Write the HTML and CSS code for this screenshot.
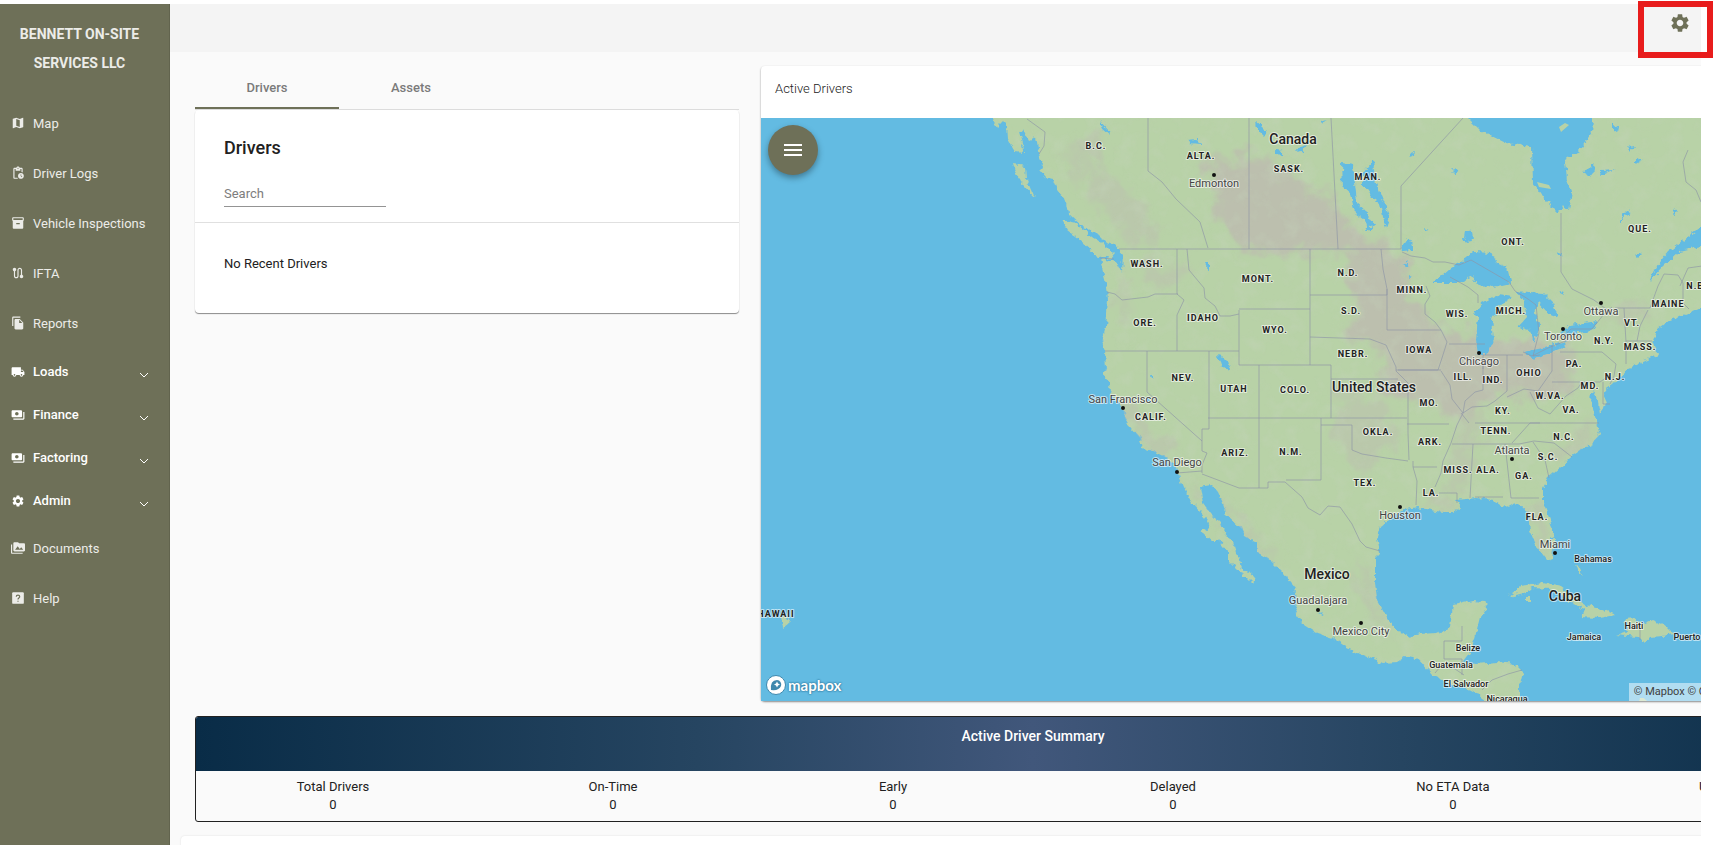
FILE: index.html
```html
<!DOCTYPE html>
<html lang="en">
<head>
<meta charset="utf-8">
<title>Bennett On-Site Services LLC</title>
<link rel="stylesheet" href="styles.css">
</head>
<body>
<div class="shell">
  <aside class="sidebar">
    <h1 class="brand">BENNETT ON-SITE SERVICES LLC</h1>
    <nav class="nav">
      <a class="nav-item" href="#map"><svg class="icon" viewBox="0 0 24 24"><path d="M20.500 3l-.16.03L15 5.100 9 3 3.360 4.900c-.21.07-.36.25-.36.48V20.500c0 .28.22.5.5.5l.16-.03L9 18.900l6 2.100 5.640-1.900c.21-.07.36-.25.36-.48V3.500c0-.28-.22-.5-.5-.5zM15 19l-6-2.110V5l6 2.110V19z"/></svg>Map</a>
      <a class="nav-item" href="#logs"><svg class="icon" viewBox="0 0 24 24"><path d="M17 12c-2.760 0-5 2.240-5 5s2.240 5 5 5 5-2.240 5-5-2.240-5-5-5zm1.650 7.350L16.500 17.200V14h1v2.790l1.850 1.850-.7.71zM18 3h-3.180C14.400 1.840 13.300 1 12 1s-2.400.84-2.820 2H6c-1.100 0-2 .9-2 2v15c0 1.100.9 2 2 2h6.110c-.59-.57-1.070-1.250-1.420-2H6V5h2v3h8V5h2v5.080c.71.1 1.380.31 2 .6V5c0-1.100-.9-2-2-2zm-6 2c-.55 0-1-.45-1-1s.45-1 1-1 1 .45 1 1-.45 1-1 1z"/></svg>Driver Logs</a>
      <a class="nav-item" href="#inspections"><svg class="icon" viewBox="0 0 24 24"><path d="M20 2H4c-1 0-2 .9-2 2v3.010c0 .72.43 1.340 1 1.690V20c0 1.100 1.100 2 2 2h14c.9 0 2-.9 2-2V8.700c.57-.35 1-.97 1-1.690V4c0-1.100-1-2-2-2zm-5 12H9v-2h6v2zm5-7H4V4h16v3z"/></svg>Vehicle Inspections</a>
      <a class="nav-item" href="#ifta"><svg class="icon" viewBox="0 0 24 24"><path d="M19 15.180V7c0-2.210-1.790-4-4-4s-4 1.790-4 4v10c0 1.100-.9 2-2 2s-2-.9-2-2V8.820C8.160 8.400 9 7.300 9 6c0-1.660-1.340-3-3-3S3 4.340 3 6c0 1.300.84 2.400 2 2.820V17c0 2.210 1.790 4 4 4s4-1.790 4-4V7c0-1.100.9-2 2-2s2 .9 2 2v8.180c-1.160.41-2 1.510-2 2.820 0 1.660 1.340 3 3 3s3-1.340 3-3c0-1.300-.84-2.400-2-2.820z"/></svg>IFTA</a>
      <a class="nav-item" href="#reports"><svg class="icon" viewBox="0 0 24 24"><path d="M16 1H4c-1.100 0-2 .9-2 2v14h2V3h12V1zm-1 4l6 6v10c0 1.100-.9 2-2 2H7.990C6.890 23 6 22.100 6 21l.01-14c0-1.100.89-2 1.990-2h7zm-1 7h5.500L14 6.500V12z"/></svg>Reports</a>
      <div class="groups">
        <button class="nav-item group" type="button"><svg class="icon" viewBox="0 0 24 24"><path d="M20 8h-3V4H3c-1.100 0-2 .9-2 2v11h2c0 1.660 1.340 3 3 3s3-1.340 3-3h6c0 1.660 1.340 3 3 3s3-1.340 3-3h2v-5l-3-4zM6 18.500c-.83 0-1.500-.67-1.500-1.500s.67-1.500 1.500-1.500 1.500.67 1.500 1.500-.67 1.500-1.500 1.500zm13.500-9l1.960 2.500H17V9.500h2.500zm-1.500 9c-.83 0-1.500-.67-1.500-1.500s.67-1.500 1.500-1.500 1.500.67 1.500 1.500-.67 1.500-1.500 1.500z"/></svg>Loads<svg class="chevron" viewBox="0 0 10 6"><path d="M1 1l4 4 4-4"/></svg></button>
        <button class="nav-item group" type="button"><svg class="icon" viewBox="0 0 24 24"><path d="M19 14V6c0-1.100-.9-2-2-2H3c-1.100 0-2 .9-2 2v8c0 1.100.9 2 2 2h14c1.100 0 2-.9 2-2zm-9-1c-1.660 0-3-1.340-3-3s1.340-3 3-3 3 1.340 3 3-1.340 3-3 3zm13-6v11c0 1.100-.9 2-2 2H4v-2h17V7h2z"/></svg>Finance<svg class="chevron" viewBox="0 0 10 6"><path d="M1 1l4 4 4-4"/></svg></button>
        <button class="nav-item group" type="button"><svg class="icon" viewBox="0 0 24 24"><path d="M19 14V6c0-1.100-.9-2-2-2H3c-1.100 0-2 .9-2 2v8c0 1.100.9 2 2 2h14c1.100 0 2-.9 2-2zm-9-1c-1.660 0-3-1.340-3-3s1.340-3 3-3 3 1.340 3 3-1.340 3-3 3zm13-6v11c0 1.100-.9 2-2 2H4v-2h17V7h2z"/></svg>Factoring<svg class="chevron" viewBox="0 0 10 6"><path d="M1 1l4 4 4-4"/></svg></button>
        <button class="nav-item group" type="button"><svg class="icon" viewBox="0 0 24 24"><path id="gear" d="M19.140 12.940c.04-.3.06-.61.06-.94 0-.32-.02-.64-.07-.94l2.030-1.580c.18-.14.23-.41.12-.61l-1.920-3.320c-.12-.22-.37-.29-.59-.22l-2.390.96c-.5-.38-1.030-.7-1.620-.94l-.36-2.540c-.04-.24-.24-.41-.48-.41h-3.840c-.24 0-.43.17-.47.41l-.36 2.540c-.59.24-1.130.57-1.620.94l-2.390-.96c-.22-.08-.47 0-.59.22L2.740 8.870c-.12.21-.08.47.12.61l2.030 1.580c-.05.3-.09.63-.09.94s.02.64.07.94l-2.030 1.580c-.18.14-.23.41-.12.61l1.920 3.320c.12.22.37.29.59.22l2.390-.96c.5.38 1.030.7 1.620.94l.36 2.540c.05.24.24.41.48.41h3.840c.24 0 .44-.17.47-.41l.36-2.540c.59-.24 1.130-.56 1.620-.94l2.390.96c.22.08.47 0 .59-.22l1.920-3.320c.12-.22.07-.47-.12-.61l-2.010-1.580zM12 15.600c-1.980 0-3.600-1.620-3.600-3.600s1.620-3.600 3.600-3.600 3.600 1.620 3.600 3.600-1.620 3.600-3.600 3.600z"/></svg>Admin<svg class="chevron" viewBox="0 0 10 6"><path d="M1 1l4 4 4-4"/></svg></button>
      </div>
      <a class="nav-item" href="#documents"><svg class="icon" viewBox="0 0 24 24"><path d="M2 6H0v5h.01L0 20c0 1.100.9 2 2 2h18v-2H2V6zm20-2h-8l-2-2H6c-1.100 0-1.990.9-1.990 2L4 16c0 1.100.9 2 2 2h16c1.100 0 2-.9 2-2V6c0-1.100-.9-2-2-2zM7 15l4.500-6 3.500 4.510 2.500-3.010L21 15H7z"/></svg>Documents</a>
      <a class="nav-item" href="#help"><svg class="icon" viewBox="0 0 24 24"><rect x="2" y="2" width="20" height="20" rx="2"/><path class="cut" d="M9 10q0-3 3-3t3 3q0 1-1.500 2T12 14.500M12 16.500v2"/></svg>Help</a>
    </nav>
  </aside>

  <div class="page">
    <header class="topbar">
      <button class="settings" type="button" aria-label="Settings"><svg viewBox="0 0 24 24"><use href="#gear"/></svg></button>
    </header>
    <main class="content">
      <div class="panels">
        <section class="drivers">
          <div class="tabs" role="tablist">
            <button class="tab active" type="button" role="tab">Drivers</button>
            <button class="tab" type="button" role="tab">Assets</button>
          </div>
          <div class="card">
            <div class="card-head">
              <h2>Drivers</h2>
              <input class="search" type="text" placeholder="Search" aria-label="Search">
            </div>
            <p class="empty">No Recent Drivers</p>
          </div>
        </section>

        <section class="map-card">
          <h2 class="map-title">Active Drivers</h2>
          <div class="map">
            <svg class="map-art" viewBox="761 118 1110 583" preserveAspectRatio="xMinYMin slice">
              <defs>
                <filter id="coast" x="0" y="0" width="1" height="1"><feTurbulence type="fractalNoise" baseFrequency=".18" numOctaves="2" seed="4" result="n"/><feDisplacementMap in="SourceGraphic" in2="n" scale="7" xChannelSelector="R" yChannelSelector="G"/></filter>
                <filter id="soft" x="-.3" y="-.3" width="1.600" height="1.600"><feTurbulence type="fractalNoise" baseFrequency=".05" numOctaves="3" seed="9" result="n"/><feGaussianBlur in="SourceGraphic" stdDeviation="4" result="b"/><feDisplacementMap in="b" in2="n" scale="36" xChannelSelector="R" yChannelSelector="G"/></filter>
                <filter id="relief" x="0" y="0" width="1" height="1"><feTurbulence type="fractalNoise" baseFrequency=".06" numOctaves="4" seed="21"/><feColorMatrix values="0 0 0 0 .56  0 0 0 0 .66  0 0 0 0 .5  2.500 0 0 0 -1.150"/><feComposite in2="SourceGraphic" operator="in"/></filter>
                <path id="mainland" d="M992 118L997 127 1003 121 1007 125 1008 140 1015 152 1024 153 1018 135 1023 128 1029 140 1036 137 1040 157 1043 165 1040 172 1045 178 1053 180 1057 190 1063 197 1067 207 1068 213 1083 227 1095 232 1103 240 1115 245 1123 255 1122 272 1117 262 1100 259 1103 272 1107 287 1108 300 1106 327 1102 340 1105 352 1106 367 1103 375 1109 382 1110 393 1117 402 1123 408 1125 418 1130 427 1140 438 1142 448 1153 451 1165 457 1172 464 1177 472 1183 487 1192 503 1207 520 1209 528 1200 531 1212 540 1218 540 1228 552 1228 560 1240 572 1252 584 1255 578 1248 570 1243 570 1237 555 1233 542 1223 530 1220 522 1210 512 1203 503 1200 487 1212 485 1218 492 1223 503 1227 515 1243 530 1245 537 1257 543 1257 552 1270 560 1283 573 1295 588 1298 603 1295 613 1302 623 1317 633 1333 638 1347 648 1367 657 1383 663 1397 662 1407 656 1417 658 1433 675 1450 683 1463 688 1480 693 1487 710 1520 710 1520 685 1523 672 1515 664 1497 662 1477 664 1463 662 1472 650 1475 637 1480 617 1487 607 1485 602 1473 601 1453 605 1450 627 1437 633 1420 634 1408 637 1397 630 1388 620 1377 600 1375 583 1375 558 1380 553 1377 537 1380 527 1388 520 1403 510 1417 507 1430 510 1443 512 1453 512 1460 507 1455 500 1477 498 1493 500 1503 507 1517 503 1528 513 1530 530 1537 547 1547 560 1553 558 1555 540 1550 520 1543 503 1543 488 1548 478 1560 468 1570 457 1585 447 1593 443 1600 435 1597 423 1593 410 1590 400 1592 390 1597 397 1600 413 1607 403 1602 392 1613 385 1622 375 1628 368 1640 363 1658 355 1652 343 1657 330 1670 320 1690 312 1701 307 1880 300 1880 110 992 110Z"/>
                <clipPath id="land-clip"><use href="#mainland"/></clipPath>
              </defs>
              <rect class="water" x="761" y="118" width="1110" height="583"/>
              <g class="land" filter="url(#coast)">
                <use href="#mainland"/>
                <path d="M1013 164l13 2 1 13 8 19-11-12-8-11zM1062 220l14 3 16 14 14 9 8 8-4 5-14-4-16-15-12-9zM1010 122l9 6 6 22-12-18zM1508 597l13-10 22-4 18 4 14 10 14 9 12 3 14 6-16 3-18-1 5-8-12-4-12-9-10-7-20-1-8 5zM1525 598h5v3h-5zM1625 620l10-1 8 5 9-4 14 6 8 8-12 2-12 1-5 6-6-6-24-2 14-4-2-5zM1568 636l12-1 10 4-10 1zM1576 565l4 1 2 10-4-5zM1781 614l8 1v6l-7 6zM1640 699l5-1 3 5h-10zM1778 609h-4zM781 616l7 1 2 5-7 6z"/>
              </g>
              <g clip-path="url(#land-clip)">
                <g class="plain" filter="url(#soft)">
                  <path d="M1204 158l60 0 50 30 40 36 50 30 8 50 36 26 44 14 50-6 30 8 4 30-34 24-50-4-26 24-50-20-36-6 4-44-30-10-2-84-50-6-60 4-20-30z"/>
                  <path class="thin" d="M1060 150l20 30 40 50 40 24-10-40-50-50zM1100 130l8 30-20 20-14-40zM1330 400l50 0 20 40-34 30-26-20zM1350 390l34 14 10 40-24 20-14-40zM1125 400l50 50-12 16-44-50zM1150 260l36 10-20 24-20-8zM1120 270l8 0 0 60-8 0zM1190 480l30 20 60 66-20-8-60-60zM1350 550l22 30 22 56-20-20zM1405 340l60 20-20 20-30-10zM1470 380l14 30-20 80-14-2 8-60zM1605 315l30-14 20 8-30 20zM1525 500l20 4 6 50-14-10zM1430 490l30 16-10 10-24-6zM1550 450l44-24 8 10-44 30z"/>
                </g>
                <use href="#mainland" filter="url(#relief)" opacity=".35"/>
              </g>
              <g class="water" filter="url(#coast)">
                <path d="M1468 110V118L1480 130 1507 143 1532 147 1533 183 1545 200 1558 213 1563 205 1569 210 1572 193 1567 180 1565 160 1580 150 1592 132 1594 110ZM1433 283L1450 268 1460 263 1473 252 1492 253 1497 263 1507 267 1511 283 1493 287 1480 285 1473 280 1475 275 1457 283ZM1482 303L1497 295 1513 297 1503 303 1497 307 1492 320 1494 340 1487 355 1478 355 1476 340 1478 317 1474 313ZM1515 291L1543 293 1553 303 1558 317 1548 313 1538 302 1535 313 1540 327 1534 343 1530 330 1518 327 1527 317 1523 300ZM1523 352L1543 348 1565 341 1566 346 1550 353 1532 359ZM1560 333L1570 325 1597 321 1593 331 1570 334ZM1363 172L1373 160 1375 180 1383 200 1390 217 1386 228 1383 217 1380 203 1372 197 1363 184ZM1342 163L1353 165 1355 183 1357 203 1365 210 1374 224 1368 231 1365 220 1355 212 1350 193 1343 187ZM1650 281L1657 266 1667 253 1687 237 1701 228 1880 200V240L1701 246 1680 251 1663 267ZM1465 230l7 1 1 10-6 1-3-5zM1218 355l4 1 8 8-3 6-6-4zM1100 121l9 10 2 5-9-8zM1187 140l10-1 5 5-13-1zM1402 245l5-7 4 5 2 7-10 1zM1256 121l6 5 5 5-3 5-7-7zM1276 149l7 1v7l-7-5zM1300 147l6-2-4 6-6 1zM1411 153l5-1-3 5-4-1zM1452 170l6 1-2 3zM1582 171l8-3 4-5 1 8-4 5zM1601 170l14-1-7 3-8 4zM1627 147l8-1-4 5zM1612 124l6 3-1 5-5-4zM1635 158l6 3-6 2zM1619 221l8-10 4 1-9 7-3 5zM1675 208l3 4-4 4zM1557 252l5 2-1 3zM1636 253l5 2-3 3zM1424 228l5 2-4 1zM1403 265l6-4-2 5zM1408 275l4 2-4 2zM1320 121l6-2-3 5zM1147 399l2-2 2 5-2 1zM1151 377h2v4zM1206 264h3v6zM1560 290l5 1-3 3zM1550 536l4 3-4 2zM1318 614l5-1-1 3z"/>
              </g>
              <path class="lake-isle" d="M1537 182l12 3 2 4-12-2zM1559 127l6-4 4 2-8 7z"/>
              <g class="borders">
                <path d="M1119 249H1401V242M1402 252l9 4 14 2 8 4 12 0 14 3 12-5 38 22 6 9 13 8 8 6 3 28-6 23 7-1M1523 352l9 4 16-8 20-8M1563 337l8-8h21l12-15 8-7M1615 308h35l8-22 6-12 14 1 5 8v20l6 6M1177 473l25-2M1202 474L1239 488H1268V482H1285L1302 497 1308 508 1320 515 1328 506 1340 507 1352 524 1360 541 1366 547 1380 551M1027 119l18 13-1 14-5 8M1100 258l14 1M1444 659v-18h18v-15M1444 659h18v16M1435 673l5-6h12l12 8M1482 690l10-10 16-6 14-4M1640 624v16"/>
                <path d="M1148 118V171L1162 182 1176 199 1200 222 1208 248M1249 118V249M1331 118L1338 249M1463 118L1401 186V242M1561 213V272L1572 289 1594 300 1610 312M1177 249V294L1184 300 1177 315V351M1105 351H1239M1187 249L1189 270 1204 288 1205 298 1215 306 1220 316H1230L1239 314M1107 292l8 2 7 6 26-3 7-3h23M1239 310V365M1239 309H1310M1310 249V365M1310 295H1387M1239 365H1331V418M1310 337l60 2 16 6 10 22 0 4M1381 249l2 20 4 20v41h54l6 12-5 16-4 12h-40M1387 289v6M1331 379H1398M1259 365V488M1209 351V418M1147 351V392L1202 441M1208 418H1407M1209 418v11h-7v22l5 2-5 12 0 8M1321 418v62h-35M1321 425h31v25l10 4 24 4 22 3M1396 371l12 12v50l1 27M1396 370h45M1407 424h42M1413 461v6l4 14-1 24M1413 467h24M1439 493h18v10M1426 286l4 10-5 8 0 10 10 8 6 8M1450 277l18 10 10 8 0 8M1449 344h36M1441 371l9 14 2 14 11 14 2-12 10-9 8-2v-32M1507 355v36l-12 10-8 5-15 1-9 6-6 12-6 18-8 18-2 12-6 14M1483 355h40M1552 345v26l-14 20-14-2-17 8M1552 382h48l10-7M1560 352h42l14 12-2 12-4 8M1530 392l8 16 12 6 16-18 12-8 4-6M1475 423H1599M1452 444h67l15-3 20 2 18 14M1512 443l18-20 10 0M1473 444l-3 54M1505 444l6 54 28 0M1475 497h28M1533 442l12 18 4 18M1624 308l2 34 0 22M1648 310l-8 16-3 15M1626 341h26M1483 355v14M1461 413l8 10M1603 382v22h7"/>
                <path d="M1688 150l-5 12 3 20 10 8 5 12M1680 286l8-18 14-2"/>
              </g>
              <g class="state">
                <text x="1096" y="149">B.C.</text><text x="1201" y="159">ALTA.</text><text x="1289" y="172">SASK.</text><text x="1368" y="180">MAN.</text><text x="1513" y="245">ONT.</text><text x="1640" y="232">QUE.</text>
                <text x="1147" y="267">WASH.</text><text x="1258" y="282">MONT.</text><text x="1348" y="276">N.D.</text><text x="1412" y="293">MINN.</text><text x="1351" y="314">S.D.</text><text x="1457" y="317">WIS.</text><text x="1511" y="314">MICH.</text>
                <text x="1145" y="326">ORE.</text><text x="1203" y="321">IDAHO</text><text x="1275" y="333">WYO.</text><text x="1353" y="357">NEBR.</text><text x="1419" y="353">IOWA</text><text x="1529" y="376">OHIO</text><text x="1463" y="380">ILL.</text><text x="1493" y="383">IND.</text>
                <text x="1183" y="381">NEV.</text><text x="1234" y="392">UTAH</text><text x="1295" y="393">COLO.</text><text x="1429" y="406">MO.</text><text x="1503" y="414">KY.</text><text x="1550" y="399">W.VA.</text><text x="1571" y="413">VA.</text>
                <text x="1151" y="420">CALIF.</text><text x="1235" y="456">ARIZ.</text><text x="1291" y="455">N.M.</text><text x="1378" y="435">OKLA.</text><text x="1430" y="445">ARK.</text><text x="1496" y="434">TENN.</text><text x="1564" y="440">N.C.</text><text x="1548" y="460">S.C.</text>
                <text x="1365" y="486">TEX.</text><text x="1431" y="496">LA.</text><text x="1458" y="473">MISS.</text><text x="1488" y="473">ALA.</text><text x="1524" y="479">GA.</text><text x="1537" y="520">FLA.</text>
                <text x="1604" y="344">N.Y.</text><text x="1574" y="367">PA.</text><text x="1615" y="380">N.J.</text><text x="1590" y="389">MD.</text><text x="1632" y="326">VT.</text><text x="1640" y="350">MASS.</text><text x="1668" y="307">MAINE</text><text x="1697" y="289">N.B.</text><text x="776" y="617">HAWAII</text>
              </g>
              <g class="country">
                <text x="1293" y="144">Canada</text><text x="1374" y="392">United States</text><text x="1327" y="579">Mexico</text><text x="1565" y="601">Cuba</text>
              </g>
              <g class="city">
                <text x="1214" y="187">Edmonton</text><text x="1123" y="403">San Francisco</text><text x="1177" y="466">San Diego</text><text x="1400" y="519">Houston</text><text x="1318" y="604">Guadalajara</text><text x="1361" y="635">Mexico City</text><text x="1555" y="548">Miami</text><text x="1512" y="454">Atlanta</text><text x="1479" y="365">Chicago</text><text x="1563" y="340">Toronto</text><text x="1601" y="315">Ottawa</text>
              </g>
              <g class="island">
                <text x="1593" y="562">Bahamas</text><text x="1634" y="629">Haiti</text><text x="1584" y="640">Jamaica</text><text x="1697" y="640">Puerto Rico</text><text x="1468" y="651">Belize</text><text x="1451" y="668">Guatemala</text><text x="1466" y="687">El Salvador</text><text x="1507" y="702">Nicaragua</text>
              </g>
              <path class="dots" d="M1214 175h0M1123 408h0M1177 472h0M1400 507h0M1318 610h0M1361 623h0M1555 553h0M1512 459h0M1479 353h0M1563 329h0M1601 303h0"/>
            </svg>
            <button class="fab" type="button" aria-label="Menu"><svg viewBox="0 0 18 12"><path d="M0 0h18v2H0zM0 5h18v2H0zM0 10h18v2H0z"/></svg></button>
            <a class="mapbox" href="#mapbox"><svg viewBox="0 0 20 20"><circle cx="10" cy="10" r="9.500" fill="#fff" stroke="#3f88ad"/><path d="M5 15q-1-10 6-10a4.500 4.500 0 0 1 4 6q-2 5-10 4z" fill="#3f88ad"/><path d="M11 6.500l1 2 2 1-2 1-1 2-1-2-2-1 2-1z" fill="#fff"/></svg>mapbox</a>
            <p class="attribution">© Mapbox © OpenStreetMap Improve this map</p>
          </div>
        </section>
      </div>

      <section class="summary">
        <h2>Active Driver Summary</h2>
        <dl class="stats">
          <div><dt>Total Drivers</dt><dd>0</dd></div>
          <div><dt>On-Time</dt><dd>0</dd></div>
          <div><dt>Early</dt><dd>0</dd></div>
          <div><dt>Delayed</dt><dd>0</dd></div>
          <div><dt>No ETA Data</dt><dd>0</dd></div>
          <div><dt>Unassigned</dt><dd>0</dd></div>
        </dl>
      </section>
      <section class="next-card" aria-label="Details"></section>
    </main>
  </div>
  <div class="callout"></div>
</div>
</body>
</html>
```
FILE: styles.css
```css
* { box-sizing: border-box; }

body {
  margin: 0;
  background: #fff;
  color: #212121;
  font-family: Roboto, "Liberation Sans", sans-serif;
  font-size: 13px;
}

h1, h2, p, dl, dd { margin: 0; }
button, input { font: inherit; color: inherit; border: 0; background: none; padding: 0; }

.shell {
  position: relative;
  display: flex;
  height: 100vh;
  padding: 4px 12px 0 0;
  overflow: hidden;
}

/* Sidebar */
.sidebar {
  flex: 0 0 170px;
  background: #6e7058;
  border-right: 1px solid #62644e;
  color: #ecece8;
}
.brand {
  padding: 16px 20px 20px 10px;
  font-size: 14px;
  font-weight: 700;
  line-height: 29px;
  text-align: center;
}
.nav { display: flex; flex-direction: column; }
.nav-item {
  display: flex;
  align-items: center;
  gap: 8px;
  width: 100%;
  height: 50px;
  padding: 0 20px 0 11px;
  color: inherit;
  text-align: left;
  text-decoration: none;
}
.groups { padding: 2px 0 1px; }
.group { height: 43px; color: #fff; font-weight: 500; }
.icon { width: 14px; height: 14px; fill: currentColor; }
.cut { fill: none; stroke: #6e7058; stroke-width: 2; }
.chevron {
  width: 10px;
  height: 6px;
  margin: 6px 0 0 auto;
  fill: none;
  stroke: currentColor;
}

/* Page */
.page {
  flex: 1;
  min-width: 0;
  overflow: hidden;
  background: #fafafa;
}
.topbar {
  display: flex;
  justify-content: flex-end;
  height: 48px;
  padding: 8px 10px;
  background: #f4f4f4;
}
.settings { width: 22px; height: 22px; color: #6e7058; }
.settings svg { display: block; fill: currentColor; }
.content {
  width: calc(100% + 170px);
  padding: 14px 0 0 11px;
}
.panels {
  display: grid;
  grid-template-columns: 544px 1fr;
  gap: 22px;
  padding-left: 14px;
}

/* Drivers */
.tabs { display: flex; border-bottom: 1px solid #dcdcdc; }
.tab {
  width: 144px;
  height: 43px;
  padding-top: 2px;
  border-bottom: 2px solid transparent;
  color: #7a7a7a;
  font-weight: 500;
}
.active { border-bottom-color: #6e7058; }
.card {
  background: #fff;
  border-radius: 4px;
  box-shadow: 0 1px 1px rgba(0, 0, 0, .45);
}
.card-head { padding: 26px 29px 15px; border-bottom: 1px solid #e0e0e0; }
.card-head h2 { font-size: 18px; font-weight: 500; line-height: 24px; }
.search {
  display: block;
  width: 162px;
  height: 26px;
  margin-top: 21px;
  border-bottom: 1px solid #949494;
}
.search::placeholder { color: #7d7d7d; opacity: 1; }
.empty { padding: 31px 29px 39px; line-height: 20px; }

/* Map */
.map-card {
  background: #fff;
  border-radius: 4px;
  box-shadow: 0 1px 2px rgba(0, 0, 0, .45);
}
.map-title {
  padding: 13px 14px 19px;
  font-size: 13px;
  font-weight: 300;
  line-height: 20px;
}
.map { position: relative; height: 583px; overflow: hidden; }
.map-art { display: block; width: 100%; height: 100%; }
.water { fill: #63bbe2; }
.land { fill: #b8d2a7; }
.lake-isle { fill: #b8d2a7; }
.plain { fill: #bcbfae; }
.thin { opacity: .55; }
.borders { fill: none; stroke: #8d95a6; stroke-opacity: .65; stroke-width: 1; }
.map-art text {
  fill: #222;
  stroke: #fff;
  stroke-opacity: .6;
  stroke-width: 2px;
  stroke-linejoin: round;
  paint-order: stroke;
  text-anchor: middle;
}
.state { font-size: 9px; font-weight: 700; letter-spacing: 1px; }
.country { font-size: 14px; font-weight: 500; }
.city { font-size: 11px; }
.map-art .city text { fill: #444; }
.island { font-size: 9px; font-weight: 500; }
.dots { stroke: #111; stroke-width: 4; stroke-linecap: round; }
.fab {
  position: absolute;
  left: 7px;
  top: 7px;
  display: grid;
  place-items: center;
  width: 50px;
  height: 50px;
  border-radius: 50%;
  background: #6e7058;
  box-shadow: 0 3px 6px rgba(0, 0, 0, .35);
}
.fab svg { width: 18px; height: 12px; fill: #fff; }
.mapbox {
  position: absolute;
  left: 5px;
  bottom: 6px;
  display: flex;
  align-items: center;
  gap: 2px;
  color: #fff;
  font-family: Lato, sans-serif;
  font-size: 15px;
  font-weight: 700;
  line-height: 20px;
  text-decoration: none;
  text-shadow: 0 0 2px #2b7298, 0 0 2px #2b7298;
}
.mapbox svg { width: 20px; height: 20px; }
.attribution {
  position: absolute;
  right: 0;
  bottom: 0;
  padding: 0 8px 0 5px;
  background: rgba(255, 255, 255, .5);
  color: #404040;
  font-size: 11px;
  line-height: 18px;
  white-space: nowrap;
}

/* Summary */
.summary {
  margin: 15px 0 14px 14px;
  border: 1px solid #212121;
  border-radius: 3px;
  overflow: hidden;
}
.summary h2 {
  height: 54px;
  padding-top: 9px;
  background: linear-gradient(90deg, #092c47, #264561 30%, #41577b 50%, #264561 72%, #092c47);
  color: #fff;
  font-size: 14px;
  font-weight: 500;
  line-height: 20px;
  text-align: center;
}
.stats {
  display: grid;
  grid-template-columns: repeat(6, 1fr);
  margin: 0 -3px;
  padding: 7px 0;
  line-height: 18px;
  text-align: center;
}
.next-card { height: 60px; border-radius: 4px; background: #fff; box-shadow: 0 0 2px rgba(0, 0, 0, .12); }

/* Highlight frame over the settings button */
.callout {
  position: absolute;
  right: 0;
  top: 1px;
  width: 75px;
  height: 57px;
  border: 6px solid #e81c1c;
  pointer-events: none;
}
```
